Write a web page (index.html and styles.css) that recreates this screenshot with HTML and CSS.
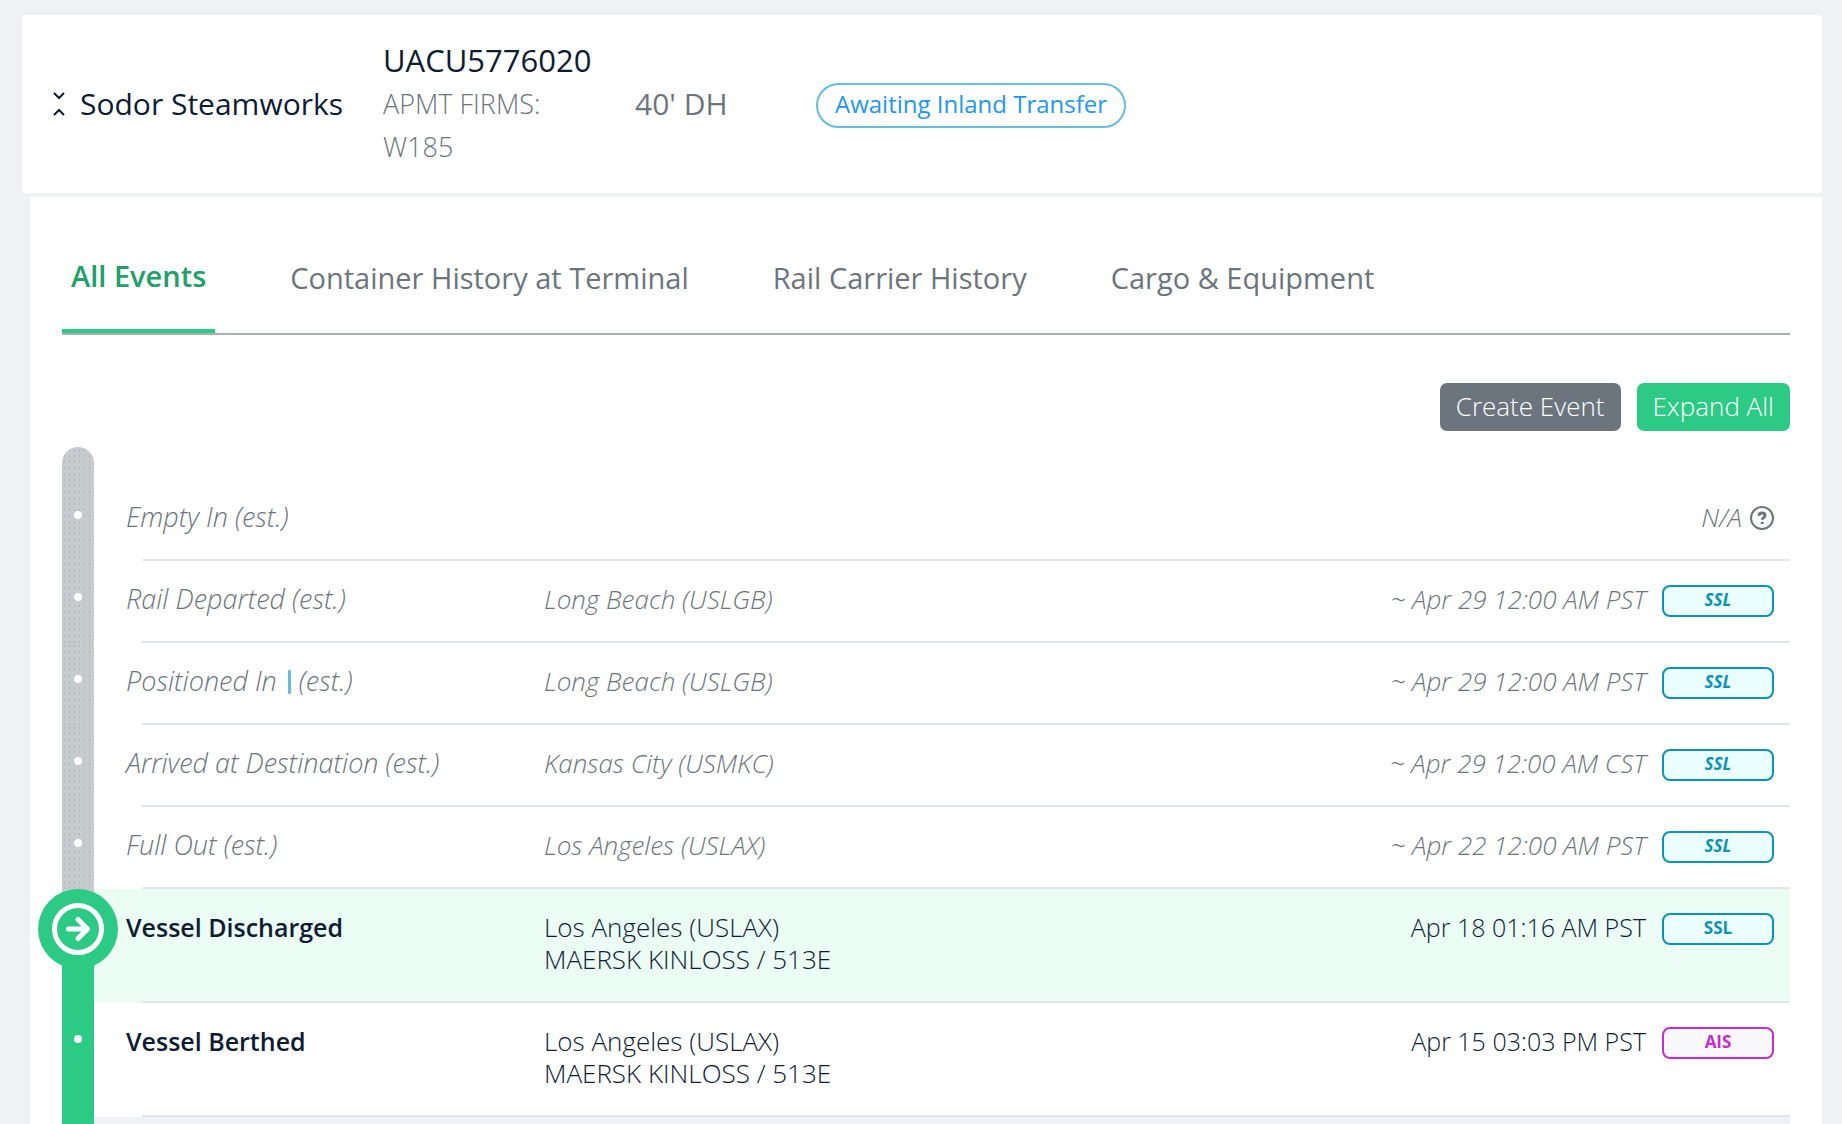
FILE: index.html
```
<!DOCTYPE html>
<html lang="en">
<head>
<meta charset="utf-8">
<title>UACU5776020 – Container events</title>
<link rel="stylesheet" href="styles.css">
</head>
<body>
<header class="summary">
  <div class="company">
    <svg class="collapse-icon" viewBox="0 0 12 24" aria-hidden="true"><path d="M1 1l5 5 5-5M1 23l5-5 5 5"/></svg>
    <span>Sodor Steamworks</span>
  </div>
  <div class="container-info">
    <strong class="container-number">UACU5776020</strong>
    <span class="terminal">APMT FIRMS: W185</span>
  </div>
  <div class="container-type">40' DH</div>
  <div><span class="status">Awaiting Inland Transfer</span></div>
</header>

<main class="panel">
  <nav class="tabs">
    <a class="tab tab-active" href="#all-events" aria-current="page">All Events</a>
    <a class="tab" href="#terminal">Container History at Terminal</a>
    <a class="tab" href="#rail">Rail Carrier History</a>
    <a class="tab" href="#cargo">Cargo &amp; Equipment</a>
  </nav>

  <div class="actions">
    <button class="btn btn-secondary" type="button">Create Event</button>
    <button class="btn btn-primary" type="button">Expand All</button>
  </div>

  <ol class="timeline">
    <li class="event estimated">
      <div class="rail"><span class="dot"></span></div>
      <div class="event-body">
        <div class="event-name">Empty In (est.)</div>
        <div class="event-place"></div>
        <div class="event-time"><span>N/A</span>
          <svg class="help-icon" viewBox="0 0 24 24" aria-hidden="true"><circle cx="12" cy="12" r="11"/><path d="M9 9.800C9 8 10.300 7 12 7s3 1 3 2.700c0 1.900-2.700 1.900-2.700 4"/><path d="M12.200 15.800v2.200"/></svg>
        </div>
      </div>
    </li>
    <li class="event estimated">
      <div class="rail"><span class="dot"></span></div>
      <div class="event-body">
        <div class="event-name">Rail Departed (est.)</div>
        <div class="event-place">Long Beach (USLGB)</div>
        <div class="event-time"><time>~ Apr 29 12:00 AM PST</time><span class="badge badge-ssl">SSL</span></div>
      </div>
    </li>
    <li class="event estimated">
      <div class="rail"><span class="dot"></span></div>
      <div class="event-body">
        <div class="event-name">Positioned In <span class="marker"></span>(est.)</div>
        <div class="event-place">Long Beach (USLGB)</div>
        <div class="event-time"><time>~ Apr 29 12:00 AM PST</time><span class="badge badge-ssl">SSL</span></div>
      </div>
    </li>
    <li class="event estimated">
      <div class="rail"><span class="dot"></span></div>
      <div class="event-body">
        <div class="event-name">Arrived at Destination (est.)</div>
        <div class="event-place">Kansas City (USMKC)</div>
        <div class="event-time"><time>~ Apr 29 12:00 AM CST</time><span class="badge badge-ssl">SSL</span></div>
      </div>
    </li>
    <li class="event estimated">
      <div class="rail"><span class="dot"></span></div>
      <div class="event-body">
        <div class="event-name">Full Out (est.)</div>
        <div class="event-place">Los Angeles (USLAX)</div>
        <div class="event-time"><time>~ Apr 22 12:00 AM PST</time><span class="badge badge-ssl">SSL</span></div>
      </div>
    </li>
    <li class="event current">
      <div class="rail">
        <svg class="current-icon" viewBox="0 0 80 80" aria-hidden="true"><circle cx="40" cy="40" r="40" fill="#2dca85"/><circle cx="40" cy="40" r="23.500"/><path d="M30.500 40H49M40 30.500l9.500 9.500-9.500 9.500"/></svg>
      </div>
      <div class="event-body">
        <div class="event-name">Vessel Discharged</div>
        <div class="event-place">Los Angeles (USLAX)<br>MAERSK KINLOSS / 513E</div>
        <div class="event-time"><time>Apr 18 01:16 AM PST</time><span class="badge badge-ssl">SSL</span></div>
      </div>
    </li>
    <li class="event">
      <div class="rail"><span class="dot"></span></div>
      <div class="event-body">
        <div class="event-name">Vessel Berthed</div>
        <div class="event-place">Los Angeles (USLAX)<br>MAERSK KINLOSS / 513E</div>
        <div class="event-time"><time>Apr 15 03:03 PM PST</time><span class="badge badge-ais">AIS</span></div>
      </div>
    </li>
    <li class="event-more"></li>
  </ol>
</main>
</body>
</html>
```
FILE: styles.css
```
* {
  box-sizing: border-box;
}

body {
  margin: 0;
  padding: 15px 20px 0 22px;
  background: #f0f1f5;
  color: #0e1c33;
  font-family: "Open Sans", "Noto Sans", sans-serif;
  font-size: 26px;
  font-weight: 350;
  line-height: 32px;
}

/* Container summary */
.summary {
  display: grid;
  grid-template-columns: 330px 252px 181px 1fr;
  align-items: center;
  padding: 24px 31px 25px;
  background: #fff;
  border-radius: 4px;
  line-height: 43px;
}

.company {
  display: flex;
  align-items: center;
  gap: 15px;
  font-size: 30px;
  font-weight: 400;
}

.collapse-icon {
  width: 12px;
  height: 24px;
  fill: none;
  stroke: #0e1c33;
  stroke-width: 2;
}

.container-info {
  padding-right: 60px;
}

.container-number {
  display: block;
  font-size: 31px;
  font-weight: 500;
}

.terminal {
  display: block;
  color: #6c757d;
  font-size: 27px;
}

.container-type {
  color: #6c757d;
  font-size: 30px;
  font-weight: 400;
}

.status {
  display: inline-block;
  margin-top: 3px;
  padding: 0 17px 3px;
  border: 2px solid #66bde3;
  border-radius: 23px;
  color: #2196f3;
  font-size: 24px;
  font-weight: 450;
  line-height: 38px;
}

/* Event panel */
.panel {
  margin: 4px 0 0 8px;
  padding: 26px 32px 0;
  background: #fff;
}

.tabs {
  display: flex;
  gap: 66px;
  height: 112px;
  border-bottom: 2px solid #a8afb5;
}

.tab {
  display: flex;
  align-items: center;
  padding: 0 9px;
  color: #6c757d;
  font-size: 29px;
  font-weight: 400;
  text-decoration: none;
}

.tab-active {
  border-bottom: 4px solid #2dca85;
  color: #22a06b;
  font-weight: 600;
}

.actions {
  display: flex;
  justify-content: flex-end;
  gap: 16px;
  margin: 48px 0 16px;
}

.btn {
  height: 48px;
  padding: 0 16px 2px;
  border: 0;
  border-radius: 7px;
  color: #fff;
  font: 350 26px/32px "Open Sans", "Noto Sans", sans-serif;
}

.btn-secondary {
  background: #6c757d;
}

.btn-primary {
  background: #2dca85;
}

/* Timeline */
.timeline {
  margin: 0;
  padding: 0;
  list-style: none;
}

.event {
  display: flex;
}

.rail {
  position: relative;
  flex: none;
  width: 32px;
  padding-top: 32px;
  background: #2dca85;
}

.estimated .rail {
  background: #c6cbcd radial-gradient(circle, #aeb5b9 1px, transparent 1px) 0 0 / 5px 6px;
}

.current .rail {
  background: linear-gradient(#c6cbcd 20px, #2dca85 20px);
}

.event:first-child .rail {
  padding-top: 64px;
  border-radius: 16px 16px 0 0;
}

.event:first-child .event-body {
  margin-top: 32px;
}

.dot {
  display: block;
  width: 8px;
  height: 8px;
  margin: 0 auto;
  border-radius: 50%;
  background: #fff;
}

.current-icon {
  position: absolute;
  top: 0;
  left: -24px;
  z-index: 1;
  width: 80px;
  height: 80px;
  fill: none;
  stroke-width: 0;
}

.current-icon circle + circle,
.current-icon path {
  stroke: #fff;
  stroke-width: 5;
  stroke-linecap: round;
  stroke-linejoin: round;
}

.event-body {
  position: relative;
  flex: 1;
  display: grid;
  grid-template-columns: 418px 1fr auto;
  padding: 22px 16px 28px 32px;
}

.event-body::after {
  content: "";
  position: absolute;
  right: 0;
  bottom: 0;
  left: 48px;
  height: 2px;
  background: #e2e6ea;
}

.event-name {
  font-size: 25px;
  font-weight: 600;
}

.estimated .event-name {
  font-size: 27px;
  font-weight: 350;
}

.estimated {
  color: #6c757d;
  font-style: italic;
}

.current .event-body {
  background: #ebfdf5;
}

.marker {
  display: inline-block;
  width: 3px;
  height: 24px;
  margin: 0 8px 0 4px;
  border-radius: 1px;
  background: #66bde3;
  vertical-align: -3px;
}

.event-time {
  display: flex;
  gap: 16px;
  height: 32px;
}

.event-time > span:first-child {
  margin-right: -8px;
}

.event-time time {
  font-size: 25px;
}

.estimated .event-time time {
  font-size: 26px;
}

.help-icon {
  width: 24px;
  height: 24px;
  margin-top: 5px;
  fill: none;
  stroke: #6c757d;
  stroke-width: 2;
}

.help-icon path {
  stroke-width: 3;
}

.badge {
  width: 112px;
  height: 32px;
  margin-top: 2px;
  border: 2px solid;
  border-radius: 8px;
  font-size: 17px;
  font-weight: 700;
  line-height: 26px;
  text-align: center;
}

.badge-ssl {
  border-color: #0c93b8;
  background: #ebffff;
  color: #0c93b8;
}

.badge-ais {
  border-color: #c32dd3;
  background: #f9f9fb;
  color: #c32dd3;
}

.event-more {
  height: 7px;
  border-left: 32px solid #2dca85;
  background: #f0f1f5;
}
```
